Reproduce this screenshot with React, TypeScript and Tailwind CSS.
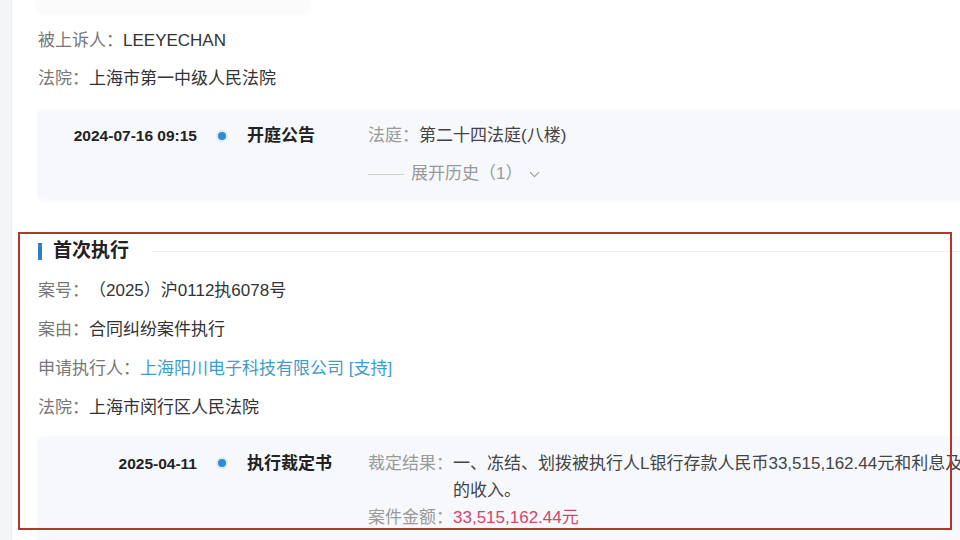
import { ChevronDown } from "lucide-react";

const font = "font-['Liberation_Sans','Noto_Sans_CJK_SC',sans-serif]";

const InfoRow = ({ label, value, tall }: { label: string; value: React.ReactNode; tall?: boolean }) => (
  <div className={`flex items-center text-[17px] ${tall ? "h-[39px]" : "h-[38px]"}`}>
    <span className="text-[#777]">{label}：</span>
    <span className="text-[#333]">{value}</span>
  </div>
);

const Dot = () => (
  <div className="w-[50px] flex justify-center shrink-0 pt-[9px]">
    <span className="block w-[8px] h-[8px] rounded-full bg-[#2f8bd6] ring-2 ring-[#d8ecfb]" />
  </div>
);

export default function App() {
  return (
    <div className={`relative w-[960px] h-[540px] overflow-hidden bg-[#f4f5f7] flex ${font}`}>
      <div className="w-[12px] shrink-0 border-r border-[#eceef1]" />

      <div className="flex-1 bg-white pl-[26px] pr-[15px]">
        {/* tail of the previous card */}
        <div className="h-[12px] w-[276px] -ml-[3px] bg-[#fbfbfc] rounded-b-md shadow-[0_2px_3px_rgba(0,0,0,0.025)]" />

        <div className="mt-[10px]">
          <InfoRow label="被上诉人" value="LEEYECHAN" />
          <InfoRow label="法院" value="上海市第一中级人民法院" />
        </div>

        <div className="mt-[12px] bg-[#f6f8fb] rounded-sm shadow-[0_1px_4px_rgba(0,0,0,0.05)] pt-[13px] pb-[11px] flex items-start">
          <div className="w-[159px] shrink-0 text-right text-[15.5px] font-bold text-[#222] leading-[26px]">
            2024-07-16 09:15
          </div>
          <Dot />
          <div className="w-[121px] shrink-0 text-[17px] font-bold text-[#222] leading-[26px]">开庭公告</div>
          <div className="flex flex-col gap-[12px] text-[17px] leading-[26px]">
            <div>
              <span className="text-[#9a9a9a]">法庭：</span>
              <span className="text-[#444]">第二十四法庭(八楼)</span>
            </div>
            <div className="flex items-center text-[#999]">
              <span className="block w-[36px] h-px bg-[#cfcfcf] mr-[7px]" />
              <span>展开历史（1）</span>
              <ChevronDown size={17} strokeWidth={1.5} className="ml-[4px] text-[#999]" />
            </div>
          </div>
        </div>

        <div className="mt-[40px] h-[26px] flex items-center">
          <span className="block w-[4px] h-[17px] bg-[#2d7fc1]" />
          <span className="ml-[11px] text-[19px] font-bold text-[#222]">首次执行</span>
          <span className="flex-1 h-px bg-[#eeeeee] ml-[22px] -mr-[15px]" />
        </div>

        <div className="mt-[7px]">
          <InfoRow tall label="案号" value="（2025）沪0112执6078号" />
          <InfoRow tall label="案由" value="合同纠纷案件执行" />
          <InfoRow
            tall
            label="申请执行人"
            value={<span className="text-[#3d9cc8]">上海阳川电子科技有限公司 [支持]</span>}
          />
          <InfoRow tall label="法院" value="上海市闵行区人民法院" />
        </div>

        <div className="mt-[10px] bg-[#f6f8fb] rounded-sm shadow-[0_1px_4px_rgba(0,0,0,0.05)] pt-[13px] pb-[20px] flex items-start">
          <div className="w-[159px] shrink-0 text-right text-[15.5px] font-bold text-[#222] leading-[27px]">
            2025-04-11
          </div>
          <Dot />
          <div className="w-[121px] shrink-0 text-[17px] font-bold text-[#222] leading-[27px]">执行裁定书</div>
          <div className="text-[17px] leading-[27px]">
            <div className="flex">
              <span className="text-[#9a9a9a] shrink-0">裁定结果：</span>
              <div className="text-[#444]">
                <div className="whitespace-nowrap">一、冻结、划拨被执行人L银行存款人民币33,515,162.44元和利息及迟延履行期间的债务利息</div>
                <div>的收入。</div>
              </div>
            </div>
            <div className="flex">
              <span className="text-[#9a9a9a] shrink-0">案件金额：</span>
              <span className="text-[#d4456a]">33,515,162.44元</span>
            </div>
          </div>
        </div>
      </div>

      {/* annotation frame */}
      <div className="absolute left-[18px] top-[232px] w-[934px] h-[298px] border-2 border-[#b0372d] pointer-events-none" />
    </div>
  );
}
